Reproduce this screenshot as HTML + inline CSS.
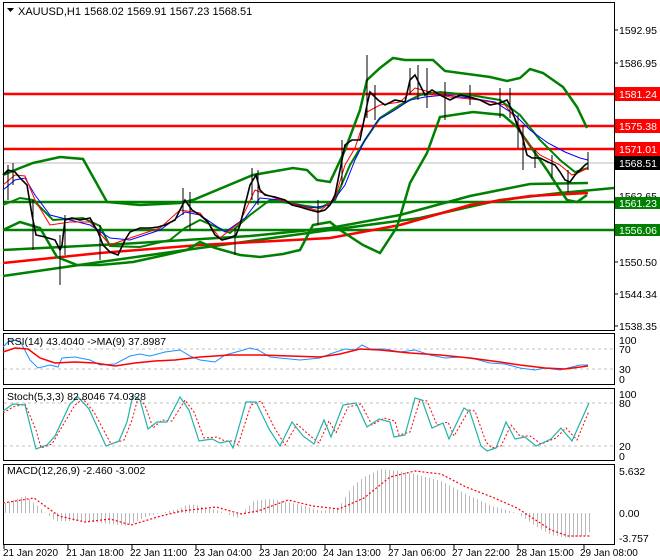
<!DOCTYPE html>
<html><head><meta charset="utf-8"><style>
html,body{margin:0;padding:0;background:#fff;}
svg{display:block;font-family:"Liberation Sans",Tahoma,sans-serif;font-size:10.5px;}
.ta text{font-size:10px;}
</style></head><body>
<svg width="660" height="560" viewBox="0 0 660 560" xmlns="http://www.w3.org/2000/svg">
<defs>
<pattern id="hb" width="4" height="10" patternUnits="userSpaceOnUse"><rect x="1" y="0" width="1" height="10" fill="#b8b8b8"/></pattern>
</defs>
<rect width="660" height="560" fill="#fff"/>
<g fill="none" stroke="#000" stroke-width="1">
<rect x="3.5" y="2.5" width="611" height="328"/>
<rect x="3.5" y="333.5" width="611" height="51"/>
<rect x="3.5" y="388.5" width="611" height="72"/>
<rect x="3.5" y="464.5" width="611" height="80"/>
</g>
<polygon points="7,8 14,8 10.5,12" fill="#000"/>
<text x="18" y="15" fill="#000" style="font-size:11px">XAUUSD,H1  1568.02 1569.91 1567.23 1568.51</text>

<line x1="4" y1="163" x2="614" y2="163" stroke="#bdbdbd" stroke-width="1"/>
<g stroke="#ff0000" stroke-width="2.5">
<line x1="4" y1="94" x2="614" y2="94"/>
<line x1="4" y1="126" x2="614" y2="126"/>
<line x1="4" y1="149" x2="614" y2="149"/>
</g>
<g stroke="#008000" stroke-width="2.5">
<line x1="4" y1="202" x2="614" y2="202"/>
<line x1="4" y1="230" x2="614" y2="230"/>
</g>

<polyline fill="none" stroke="#008000" stroke-width="2.5" points="3,276 100,262 200,248 330,230 420,218 500,200 560,193 614,188"/>
<polyline fill="none" stroke="#008000" stroke-width="2.5" points="3,250 120,244 250,236 330,228 400,215 470,196 530,184 588,183"/>
<polyline fill="none" stroke="#ff0000" stroke-width="2.5" points="3,263 100,253 200,245 330,238 400,225 470,205 530,196 588,193"/>

<polyline fill="none" stroke="#008000" stroke-width="2.5" points="3,175 20,168 33,163 60,157 83,159 107,202 140,205 180,203 193,200 253,175 293,168 307,170 317,180 330,182 345,150 360,110 367,80 380,68 393,58 405,60 433,60 445,71 490,77 507,81 520,78 530,69 543,73 563,87 577,107 587,128"/>
<polyline fill="none" stroke="#008000" stroke-width="2.5" points="3,230 20,222 40,228 57,257 77,265 100,265 133,262 165,255 187,250 200,242 215,248 240,255 260,257 283,254 300,250 313,225 330,222 340,230 363,245 380,253 397,227 410,183 427,153 440,117 473,112 503,115 517,127 533,150 547,170 560,190 567,200 577,202 587,195"/>
<polyline fill="none" stroke="#008000" stroke-width="2" points="3,205 20,198 33,200 53,220 83,218 100,226 110,246 140,247 170,240 185,228 200,220 230,233 250,215 270,200 300,205 320,208 335,200 350,165 365,140 380,118 400,105 420,95 440,92 470,95 500,100 520,115 540,140 560,160 575,172 588,168"/>

<polyline fill="none" stroke="#0000ff" stroke-width="1" points="3,190 15,180 25,178 35,195 50,215 70,220 90,225 110,238 130,240 160,230 185,212 200,215 225,232 245,218 260,198 280,200 310,208 330,205 345,185 355,160 365,140 378,120 395,110 410,100 425,97 445,95 470,98 495,102 515,115 530,130 548,143 565,152 580,158 588,160"/>
<polyline fill="none" stroke="#ff0000" stroke-width="1" points="3,185 15,175 25,176 35,200 50,225 70,222 90,222 110,245 130,238 160,228 180,210 200,213 220,238 240,222 255,190 275,198 300,206 320,211 335,198 345,165 355,148 367,112 380,105 400,102 415,88 430,92 450,97 480,100 505,105 515,118 525,140 540,155 560,165 572,175 580,172 588,168"/>

<polyline fill="none" stroke="#000" stroke-width="1.6" points="3,175 8,170 15,172 20,178 27,185 32,215 36,235 45,237 55,240 60,250 62,245 65,220 72,218 80,220 90,218 98,232 103,245 110,252 118,255 125,240 130,232 140,228 150,228 158,227 165,225 175,220 180,210 185,200 192,210 200,215 208,222 215,235 222,240 230,238 236,235 240,225 245,205 250,185 256,175 260,190 265,195 275,197 285,200 292,205 300,207 310,210 318,212 325,210 330,205 335,195 340,170 345,145 352,140 360,140 367,105 370,92 378,100 385,105 395,100 405,102 410,80 415,75 420,85 425,95 432,90 440,95 450,100 460,95 470,97 480,100 490,105 500,103 507,100 512,110 517,125 522,135 527,155 532,158 540,158 548,162 555,165 560,172 565,180 570,182 575,175 580,170 585,165 588,163"/>
<g stroke="#000" stroke-width="1">
<line x1="8" y1="165" x2="8" y2="200"/><line x1="13" y1="163" x2="13" y2="185"/><line x1="33" y1="200" x2="33" y2="250"/>
<line x1="60" y1="235" x2="60" y2="285"/><line x1="65" y1="215" x2="65" y2="255"/><line x1="100" y1="225" x2="100" y2="260"/>
<line x1="183" y1="188" x2="183" y2="215"/><line x1="190" y1="192" x2="190" y2="230"/><line x1="235" y1="228" x2="235" y2="255"/>
<line x1="252" y1="168" x2="252" y2="200"/><line x1="258" y1="170" x2="258" y2="205"/><line x1="318" y1="200" x2="318" y2="225"/>
<line x1="342" y1="140" x2="342" y2="185"/><line x1="367" y1="55" x2="367" y2="118"/><line x1="375" y1="85" x2="375" y2="120"/>
<line x1="410" y1="68" x2="410" y2="95"/><line x1="418" y1="65" x2="418" y2="100"/><line x1="427" y1="68" x2="427" y2="108"/>
<line x1="445" y1="82" x2="445" y2="120"/><line x1="470" y1="85" x2="470" y2="105"/><line x1="500" y1="88" x2="500" y2="118"/>
<line x1="510" y1="88" x2="510" y2="118"/><line x1="518" y1="115" x2="518" y2="148"/><line x1="523" y1="125" x2="523" y2="170"/>
<line x1="535" y1="150" x2="535" y2="168"/><line x1="552" y1="155" x2="552" y2="178"/><line x1="568" y1="170" x2="568" y2="192"/>
<line x1="588" y1="152" x2="588" y2="170"/>
</g>

<g fill="#000">
<text x="619" y="34">1592.95</text>
<text x="619" y="67">1586.95</text>
<text x="619" y="200">1562.65</text>
<text x="619" y="266">1550.50</text>
<text x="619" y="298">1544.34</text>
<text x="619" y="330">1538.35</text>
</g>
<g stroke="#000"><line x1="614" y1="30" x2="618" y2="30"/><line x1="614" y1="63" x2="618" y2="63"/><line x1="614" y1="262" x2="618" y2="262"/><line x1="614" y1="294" x2="618" y2="294"/><line x1="614" y1="326" x2="618" y2="326"/></g>
<rect x="615" y="87" width="45" height="14" fill="#ff0000"/><text x="619" y="98" fill="#fff">1581.24</text>
<rect x="615" y="119" width="45" height="14" fill="#ff0000"/><text x="619" y="130" fill="#fff">1575.38</text>
<rect x="615" y="142" width="45" height="14" fill="#ff0000"/><text x="619" y="153" fill="#fff">1571.01</text>
<rect x="615" y="156" width="45" height="14" fill="#000"/><text x="619" y="167" fill="#fff">1568.51</text>
<rect x="615" y="197" width="45" height="12" fill="#008000"/><text x="619" y="207" fill="#fff">1561.23</text>
<rect x="615" y="224" width="45" height="12" fill="#008000"/><text x="619" y="234" fill="#fff">1556.06</text>

<g stroke="#c0c0c0" stroke-dasharray="3,3"><line x1="4" y1="349" x2="614" y2="349"/><line x1="4" y1="369" x2="614" y2="369"/></g>
<polyline fill="none" stroke="#1e90ff" stroke-width="1" points="3,347 10,340 20,341 30,360 38,368 50,365 58,367 62,358 75,357 90,360 100,365 115,364 130,356 140,354 150,356 165,352 180,350 190,356 200,360 215,362 225,355 240,351 250,348 258,350 270,357 290,359 300,360 320,358 330,354 345,349 355,350 362,345 370,349 385,349 400,352 415,350 430,355 445,358 460,357 475,359 490,363 505,364 520,368 535,370 545,368 560,370 572,367 580,365 588,365"/>
<polyline fill="none" stroke="#ff0000" stroke-width="1.5" points="3,352 15,348 28,349 40,358 55,363 75,362 95,363 115,366 135,363 155,361 175,360 200,357 230,355 260,355 290,356 320,357 340,354 360,349 380,350 410,353 440,355 470,358 500,362 520,365 545,368 565,369 588,366"/>
<text x="7" y="345" fill="#000">RSI(14) 43.4040  -&gt;MA(9) 37.8987</text>
<g fill="#000"><text x="619" y="344">100</text><text x="619" y="353">70</text><text x="619" y="373">30</text><text x="619" y="383">0</text></g>

<g stroke="#c0c0c0" stroke-dasharray="3,3"><line x1="4" y1="403" x2="614" y2="403"/><line x1="4" y1="446" x2="614" y2="446"/></g>
<polyline fill="none" stroke="#ff0000" stroke-width="1" stroke-dasharray="2,2" points="3,413 13,407 25,404 36,430 41,448 52,444 60,430 75,405 83,399 94,412 111,444 124,440 132,420 138,398 145,405 153,428 162,420 172,421 185,400 194,412 204,438 217,437 225,441 234,441 238,445 251,405 261,401 274,427 285,445 297,424 308,434 319,443 329,421 336,433 348,407 361,404 372,425 384,418 395,421 399,435 410,432 420,400 427,401 437,425 448,422 454,436 469,410 475,411 486,442 492,448 501,446 511,425 520,436 530,436 541,444 556,438 566,428 577,440 589,411"/>
<polyline fill="none" stroke="#20b2aa" stroke-width="1.2" points="3,411 13,404 25,405 36,449 47,445 55,436 70,404 78,397 89,409 106,446 119,441 127,422 133,395 140,400 148,429 157,422 167,422 180,397 189,410 199,441 212,439 220,443 229,441 233,448 246,402 256,402 269,429 280,446 292,422 303,436 314,444 324,420 331,437 343,405 356,403 367,427 379,419 390,422 394,437 405,435 415,398 422,400 432,428 443,423 449,439 464,408 470,412 481,446 487,451 496,448 506,422 515,439 525,437 536,446 551,439 561,428 572,441 589,403"/>
<text x="7" y="400" fill="#000">Stoch(5,3,3) 82.8046 74.0328</text>
<g fill="#000"><text x="619" y="398">100</text><text x="619" y="407">80</text><text x="619" y="450">20</text><text x="619" y="460">0</text></g>

<polygon fill="url(#hb)" points="3,513 3,504 25,496 38,506 55,521 85,521 127,526 148,516 178,509 191,504 220,511 237,518 254,501 271,499 297,504 322,511 339,507 352,487 364,477 381,469 398,471 415,474 441,481 466,494 492,506 517,513 534,525 551,535 568,538 585,536 591,531 591,513"/>
<polyline fill="none" stroke="#ff0000" stroke-width="1.2" stroke-dasharray="2,2" points="3,503 34,498 59,516 85,522 110,519 131,525 161,516 182,511 216,507 241,514 258,511 288,500 313,506 339,509 364,498 390,477 415,471 441,474 466,487 492,497 517,508 551,530 568,536 591,536"/>
<text x="7" y="474" fill="#000">MACD(12,26,9) -2.460 -3.002</text>
<g fill="#000"><text x="619" y="475">5.632</text><text x="619" y="517">0.00</text><text x="619" y="542">-3.757</text></g>

<g stroke="#000"><line x1="4" y1="545" x2="4" y2="549"/><line x1="68" y1="545" x2="68" y2="549"/><line x1="132" y1="545" x2="132" y2="549"/><line x1="196" y1="545" x2="196" y2="549"/><line x1="261" y1="545" x2="261" y2="549"/><line x1="325" y1="545" x2="325" y2="549"/><line x1="390" y1="545" x2="390" y2="549"/><line x1="454" y1="545" x2="454" y2="549"/><line x1="518" y1="545" x2="518" y2="549"/><line x1="584" y1="545" x2="584" y2="549"/></g>
<g fill="#000" class="ta">
<text x="3" y="556">21 Jan 2020</text>
<text x="66" y="556">21 Jan 18:00</text>
<text x="130" y="556">22 Jan 11:00</text>
<text x="194" y="556">23 Jan 04:00</text>
<text x="259" y="556">23 Jan 20:00</text>
<text x="323" y="556">24 Jan 13:00</text>
<text x="388" y="556">27 Jan 06:00</text>
<text x="452" y="556">27 Jan 22:00</text>
<text x="516" y="556">28 Jan 15:00</text>
<text x="580" y="556">29 Jan 08:00</text>
</g>
</svg>
</body></html>
